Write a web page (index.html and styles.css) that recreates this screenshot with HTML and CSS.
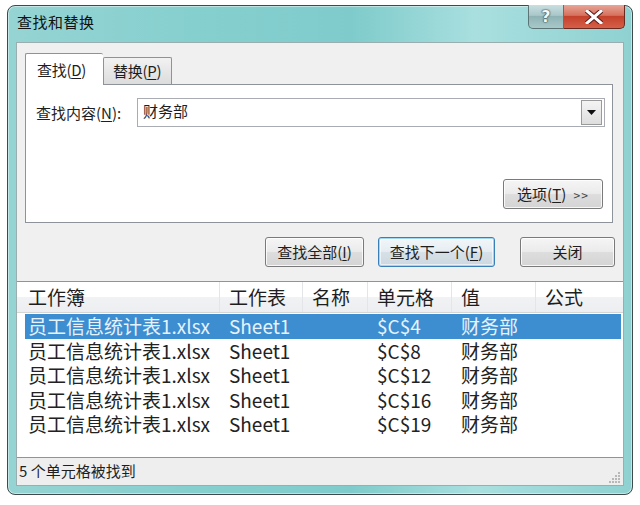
FILE: index.html
```html
<!DOCTYPE html>
<html lang="zh-CN">
<head>
<meta charset="utf-8">
<title>查找和替换</title>
<link rel="stylesheet" href="styles.css">
</head>
<body>
<div class="window">
  <div class="titlebar">
    <span class="title">查找和替换</span>
    <div class="caption">
      <div class="cap-help"><span>?</span></div>
      <div class="cap-close">
        <svg width="18" height="14" viewBox="0 0 18 14"><path d="M2 1 L16 13 M16 1 L2 13" stroke="#5a1a1a" stroke-width="5" stroke-linecap="square"/><path d="M2 1 L16 13 M16 1 L2 13" stroke="#ffffff" stroke-width="3" stroke-linecap="square"/></svg>
      </div>
    </div>
  </div>
  <div class="client">
    <div class="find-area">
      <div class="tabs">
        <div class="tab active">查找(<u>D</u>)</div>
        <div class="tab">替换(<u>P</u>)</div>
      </div>
      <div class="panel">
        <div class="field">
          <span class="label">查找内容(<u>N</u>):</span>
          <div class="combo">
            <span class="combo-text">财务部</span>
            <div class="combo-btn"><svg width="9" height="5" viewBox="0 0 9 5"><path d="M0 0 H9 L4.5 5 Z" fill="#111"/></svg></div>
          </div>
        </div>
        <div class="options-row">
          <button class="btn btn-options">选项(<u>T</u>) <span class="arrows">&gt;&gt;</span></button>
        </div>
      </div>
    </div>
    <div class="actions">
      <button class="btn btn-all">查找全部(<u>I</u>)</button>
      <button class="btn btn-next">查找下一个(<u>F</u>)</button>
      <button class="btn btn-close">关闭</button>
    </div>
    <div class="results">
      <div class="header">
        <div class="hcell">工作簿</div>
        <div class="hcell">工作表</div>
        <div class="hcell">名称</div>
        <div class="hcell">单元格</div>
        <div class="hcell">值</div>
        <div class="hcell">公式</div>
      </div>
      <div class="rows">
        <div class="row selected"><span>员工信息统计表1.xlsx</span><span>Sheet1</span><span></span><span>$C$4</span><span>财务部</span><span></span></div>
        <div class="row"><span>员工信息统计表1.xlsx</span><span>Sheet1</span><span></span><span>$C$8</span><span>财务部</span><span></span></div>
        <div class="row"><span>员工信息统计表1.xlsx</span><span>Sheet1</span><span></span><span>$C$12</span><span>财务部</span><span></span></div>
        <div class="row"><span>员工信息统计表1.xlsx</span><span>Sheet1</span><span></span><span>$C$16</span><span>财务部</span><span></span></div>
        <div class="row"><span>员工信息统计表1.xlsx</span><span>Sheet1</span><span></span><span>$C$19</span><span>财务部</span><span></span></div>
      </div>
    </div>
    <div class="statusbar">
      <span class="status-text">5 个单元格被找到</span>
      <svg class="grip" width="12" height="12" viewBox="0 0 12 12" fill="#b8b8b8"><rect x="9" y="1" width="2" height="2"/><rect x="6" y="4" width="2" height="2"/><rect x="9" y="4" width="2" height="2"/><rect x="3" y="7" width="2" height="2"/><rect x="6" y="7" width="2" height="2"/><rect x="9" y="7" width="2" height="2"/><rect x="0" y="10" width="2" height="2"/><rect x="3" y="10" width="2" height="2"/><rect x="6" y="10" width="2" height="2"/><rect x="9" y="10" width="2" height="2"/></svg>
    </div>
  </div>
</div>
</body>
</html>
```

FILE: styles.css
```css
* { box-sizing: border-box; }
html, body { margin: 0; padding: 0; background: #ffffff; }
body {
  font-family: "Noto Sans CJK SC", "Noto Sans", sans-serif;
  font-size: 15px;
  color: #1e1e1e;
}
u { text-decoration: underline; text-underline-offset: 2px; }

.window {
  margin: 5px 0 0 7px;
  width: 626px;
  height: 490px;
  border: 1px solid #3e4a4c;
  border-radius: 8px;
  background: linear-gradient(to right, #95d4d3 0%, #86cfcf 30%, #7fcbcb 55%, #a9dfdf 75%, #8fd1d1 100%);
  padding: 0 8px 8px 8px;
  display: flex;
  flex-direction: column;
  box-shadow: inset 0 0 0 1px rgba(255,255,255,0.45);
}

.titlebar {
  height: 36px;
  display: flex;
  align-items: flex-start;
  justify-content: space-between;
  flex: none;
}
.title {
  margin-top: 6px;
  padding-left: 1px;
  font-size: 15px;
  letter-spacing: 0.5px;
  color: #111;
  line-height: 20px;
}
.caption {
  display: flex;
  margin-top: -1px;
  margin-right: -1px;
}
.cap-help {
  width: 36px;
  height: 24px;
  border: 1px solid #5b7576;
  border-top: none;
  border-radius: 0 0 0 5px;
  background: linear-gradient(to bottom, #c9dfe0 0%, #a9c7c9 45%, #8fb3b5 50%, #a8c9ca 100%);
  display: flex;
  align-items: center;
  justify-content: center;
}
.cap-help span {
  font-family: "DejaVu Sans", sans-serif;
  font-size: 16px;
  font-weight: bold;
  color: #f4f8f8;
  text-shadow: 0 0 1px #3a4a4c, 0 0 1px #3a4a4c, 0 0 2px #3a4a4c;
  line-height: 1;
}
.cap-close {
  width: 61px;
  height: 24px;
  border: 1px solid #6a2a22;
  border-top: none;
  border-left: none;
  border-radius: 0 0 5px 0;
  background: linear-gradient(to bottom, #e7a596 0%, #d6705e 45%, #c4412c 50%, #d65f48 100%);
  display: flex;
  align-items: center;
  justify-content: center;
}

.client {
  flex: 1;
  border: 1px solid #9aaeb0;
  background: #f0f0f0;
  display: flex;
  flex-direction: column;
}

.find-area {
  padding: 10px 10px 0 8px;
}
.tabs {
  display: flex;
  align-items: flex-end;
  height: 31px;
  position: relative;
  z-index: 1;
}
.tab {
  height: 27px;
  width: 69px;
  padding: 0 0 0 9px;
  border: 1px solid #8e929a;
  border-bottom: none;
  border-radius: 2px 2px 0 0;
  background: linear-gradient(to bottom, #f2f2f2, #dcdcdc);
  line-height: 25px;
  white-space: nowrap;
  letter-spacing: -0.3px;
}
.tab.active {
  height: 32px;
  width: 78px;
  padding-left: 11px;
  background: #ffffff;
  line-height: 32px;
  margin-bottom: -1px;
  border-right: none;
}

.panel {
  height: 139px;
  background: #ffffff;
  border: 1px solid #8e929a;
  padding: 13px 7px 13px 10px;
  display: flex;
  flex-direction: column;
  justify-content: space-between;
}
.field {
  display: flex;
  align-items: center;
}
.label {
  width: 101px;
  flex: none;
  white-space: nowrap;
}
.combo {
  flex: 1;
  height: 29px;
  border: 1px solid #a9acb3;
  background: #fff;
  display: flex;
  align-items: center;
  justify-content: space-between;
  padding: 2px 2px 2px 5px;
}
.combo-text { line-height: 20px; padding-bottom: 3px; }
.combo-btn {
  width: 21px;
  height: 25px;
  border: 1px solid #9a9a9a;
  background: linear-gradient(to bottom, #f4f4f4, #dedede);
  display: flex;
  align-items: center;
  justify-content: center;
}
.options-row {
  display: flex;
  justify-content: flex-end;
  padding-right: 2px;
}

.btn {
  font-family: inherit;
  font-size: 15px;
  color: #1e1e1e;
  height: 30px;
  border: 1px solid #7a7a7a;
  border-radius: 3px;
  background: linear-gradient(to bottom, #f5f5f5 0%, #ebebeb 48%, #dddddd 52%, #d4d4d4 100%);
  box-shadow: inset 0 0 0 1px rgba(255,255,255,0.8);
  padding: 0;
  line-height: 26px;
  white-space: nowrap;
}
.btn-options { width: 100px; }
.arrows { font-size: 12px; letter-spacing: 1px; margin-left: 4px; color: #444; }

.actions {
  display: flex;
  justify-content: flex-end;
  padding: 14px 8px 0 0;
  height: 58px;
}
.btn-all { width: 99px; }
.btn-next {
  width: 117px;
  margin-left: 14px;
  border-color: #3a7fb8;
  box-shadow: inset 0 0 0 1px #9fd6f2, inset 0 0 0 2px rgba(255,255,255,0.6);
  background: linear-gradient(to bottom, #f2f6f9 0%, #e6edf2 48%, #d6e0e7 52%, #ccd7df 100%);
}
.btn-close { width: 95px; margin-left: 25px; }

.results {
  height: 177px;
  background: #ffffff;
  border-top: 1px solid #8d949a;
  border-bottom: 1px solid #8d949a;
  font-size: 19px;
}
.header {
  display: grid;
  grid-template-columns: 203px 83px 65px 84px 84px 1fr;
  height: 31px;
  background: linear-gradient(to bottom, #ffffff 0%, #ffffff 50%, #f1f2f4 51%, #eceef1 100%);
  border-bottom: 1px solid #d5d5d5;
}
.hcell {
  padding-left: 9px;
  line-height: 30px;
  border-right: 1px solid #e3e5e8;
  color: #1e1e1e;
}
.hcell:first-child { padding-left: 11px; }
.hcell:last-child { border-right: none; }
.rows { padding-top: 1px; }
.row {
  display: grid;
  grid-template-columns: 195px 83px 65px 84px 84px 1fr;
  height: 24.5px;
  line-height: 24px;
  margin: 0 2px 0 8px;
  color: #222;
}
.row span { padding-left: 9px; white-space: nowrap; }
.row span:first-child { padding-left: 3px; }
.row.selected {
  background: #3c8ed0;
  color: #e6f2fd;
}

.statusbar {
  flex: 1;
  display: flex;
  justify-content: space-between;
  align-items: flex-end;
  padding: 0 2px 3px 2px;
  background: #eeeeee;
}
.status-text { font-size: 15px; line-height: 22px; }
.grip { margin-bottom: -1px; }
```
